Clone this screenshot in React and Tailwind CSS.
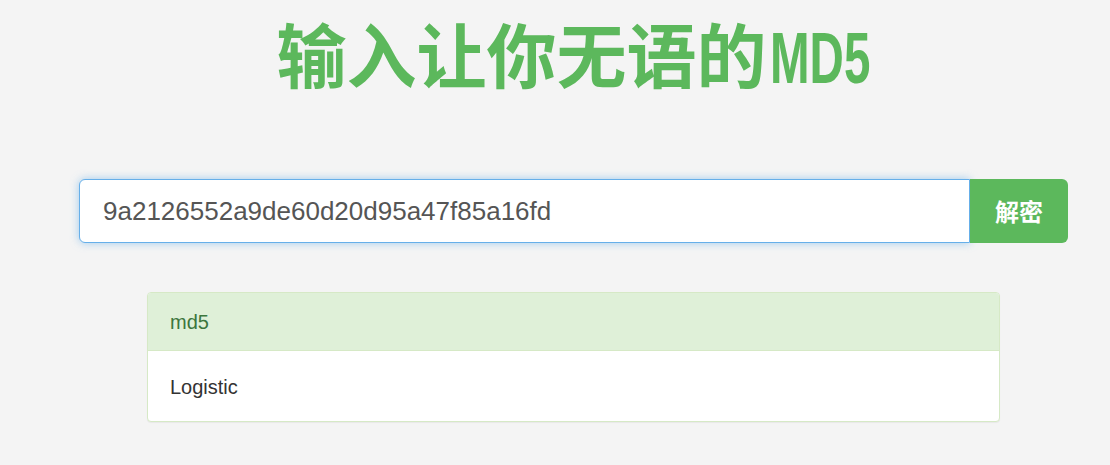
export default function App() {
  return (
    <div className="min-h-[465px] w-full bg-[#f4f4f4] pl-[79px] pr-[42px] pt-[10px]" style={{ fontFamily: '"Liberation Sans", Arial, "Noto Sans CJK SC", sans-serif' }}>
      <h1 className="flex items-baseline justify-center text-[70px] leading-[86px] font-bold text-[#5cb85c]">
        <span style={{ fontFamily: '"Noto Sans CJK SC", sans-serif' }}>输入让你无语的</span>
        <span className="inline-block w-[104px] pl-[3px] text-[72px]">
          <span className="inline-block origin-left scale-x-[0.66]" style={{ fontFamily: '"Liberation Sans", Arial, sans-serif' }}>MD5</span>
        </span>
      </h1>
      <div className="mt-[78px] flex h-[64px]">
        <div className="flex flex-1 items-center rounded-l-[6px] border border-[#66afe9] bg-white pl-[23px] text-[26px] text-[#555] shadow-[0_0_8px_rgba(102,175,233,0.6)]">
          9a2126552a9de60d20d95a47f85a16fd
        </div>
        <button className="w-[98px] rounded-r-[6px] bg-[#5cb85c] text-[24px] font-bold text-white" style={{ fontFamily: '"Noto Sans CJK SC", sans-serif' }}>
          解密
        </button>
      </div>
      <div className="mx-[68px] mt-[49px] overflow-hidden rounded-[4px] border border-[#d6e9c6] bg-white shadow-[0_1px_1px_rgba(0,0,0,0.05)]">
        <div className="flex h-[58px] items-center border-b border-[#d6e9c6] bg-[#dff0d8] px-[22px] text-[20px] text-[#3c763d]">
          md5
        </div>
        <div className="flex h-[70px] items-center px-[22px] pt-[2px] text-[20px] text-[#333]">
          Logistic
        </div>
      </div>
    </div>
  );
}
